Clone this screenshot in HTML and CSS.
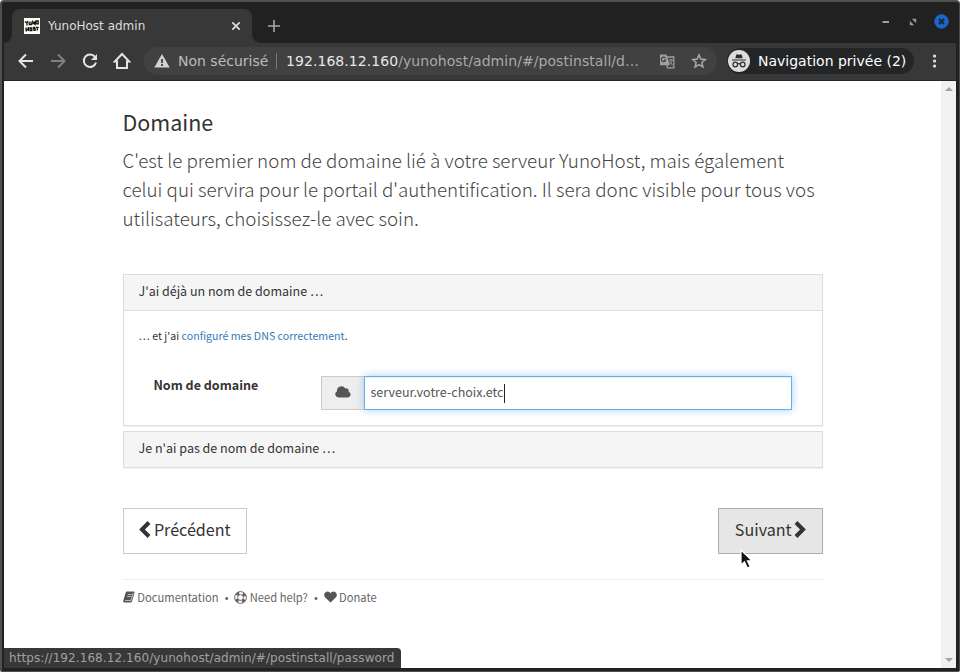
FILE: index.html
```html
<!DOCTYPE html>
<html lang="fr">
<head>
<meta charset="utf-8">
<title>YunoHost admin</title>
<link rel="stylesheet" href="styles.css">
</head>
<body>
<div class="window">
  <header class="tabstrip">
    <div class="tab">
      <svg class="favicon" width="16" height="16" viewBox="0 0 16 16"><path fill="#fffff8" d="M0 0h16v16H0z"/><path fill="none" stroke="#111" stroke-width="1.300" d="M1 3.500l1.700 1.500 1-2M3 5v2.500M5 3.500l.3 3h2l-.3-3M8.800 6.500V3.600l2 2.600V3.300M12 3h2.200v2.800H12zM2 9.500l.3 4M2 11.500h2M4.300 9v4M6 10h1.800v2.500H6zM11.300 9.500H9.700v1.300h1.400v1.500H9.300M12 9.300h2.700M13.300 9v3.500"/></svg>
      <span class="tab-title">YunoHost admin</span>
      <svg width="10" height="10" viewBox="0 0 10 10"><path d="M1.300 1.300l7.400 7.400M8.700 1.300L1.300 8.700" stroke="#dedede" stroke-width="1.700"/></svg>
    </div>
    <svg class="plus" width="12" height="12" viewBox="0 0 12 12"><path d="M6 0v12M0 6h12" stroke="#a8a8a8" stroke-width="1.600"/></svg>
    <div class="controls">
      <svg width="8" height="8" viewBox="0 0 8 8"><path d="M.5 4H7" stroke="#a0a0a0" stroke-width="2"/></svg>
      <svg width="8" height="8" viewBox="0 0 8 8"><path d="M2.800.8h4.400v4.400zM.8 2.800v4.400h4.400z" fill="#969696"/></svg>
      <svg width="15" height="15" viewBox="0 0 15 15"><circle cx="7.500" cy="7.500" r="7.200" fill="#1967c6"/><path d="M5 5l5 5M10 5l-5 5" stroke="#1d2733" stroke-width="2"/></svg>
    </div>
  </header>
  <nav class="toolbar">
    <svg class="nav-icon" width="16" height="16" viewBox="0 0 16 16"><path d="M15 8H2M8 1.500L1.500 8 8 14.500" fill="none" stroke="#e4e4e4" stroke-width="2"/></svg>
    <svg class="nav-icon" width="16" height="16" viewBox="0 0 16 16"><path d="M1 8h13M8 1.500L14.500 8 8 14.500" fill="none" stroke="#808080" stroke-width="2"/></svg>
    <svg class="nav-icon" width="16" height="16" viewBox="0 0 16 16"><path d="M13 4a6.200 6.200 0 1 0 1 5.500" fill="none" stroke="#e4e4e4" stroke-width="2"/><path d="M15 1v6H9z" fill="#e4e4e4"/></svg>
    <svg class="nav-icon" width="18" height="18" viewBox="0 0 18 18"><path d="M1.800 9.500L9 2l7.200 7.500H14V16H4V9.500z" fill="none" stroke="#e4e4e4" stroke-width="2"/></svg>
    <div class="omnibox">
      <svg width="16" height="14" viewBox="0 0 16 14"><path fill="#d2d2d2" d="M8 0l7.700 13.500H.3z"/><path d="M8 5v4M8 10v2" stroke="#3f3f3f" stroke-width="1.800"/></svg>
      <span class="insecure">Non sécurisé</span>
      <span class="url"><b>192.168.12.160</b>/yunohost/admin/#/postinstall/d…</span>
      <svg class="translate" width="15" height="15" viewBox="0 0 15 15"><path fill="#a0a0a0" d="M0 .5h6.500l3.300 10.700H0z"/><path d="M7 3h6.800v10.800H7.500l-.7-3" fill="none" stroke="#a0a0a0" stroke-width="1.300"/><path d="M5.300 4A2.200 2.200 0 1 0 5.700 6H3.500" fill="none" stroke="#414141" stroke-width="1.200"/><path d="M8.500 6h4.500M10.700 5v1M12 6.200c-.5 2-1.500 3.200-2.500 4M9.500 7.500l3 3.700" fill="none" stroke="#a0a0a0"/></svg>
      <svg class="star" width="16" height="16" viewBox="0 0 16 16"><path d="M8 1.900l1.800 4.200 4.500.4-3.400 3 1 4.400L8 11.600l-3.900 2.300 1-4.400-3.400-3 4.500-.4z" fill="none" stroke="#a9a9a9" stroke-width="1.500"/></svg>
    </div>
    <div class="private">
      <svg width="22" height="22" viewBox="0 0 22 22"><circle cx="11" cy="11" r="11" fill="#dcdcdc"/><path d="M7.300 8.300L8.500 4.200l2.500.6 2.500-.6 1.200 4.100z" fill="#292b2e"/><path d="M4 10h14" stroke="#292b2e" stroke-width="1.200"/><g fill="none" stroke="#292b2e" stroke-width="1.200"><circle cx="7.300" cy="14.500" r="2.300"/><circle cx="14.700" cy="14.500" r="2.300"/><path d="M9.600 14q1.400-.8 2.800 0"/></g></svg>
      <span>Navigation privée (2)</span>
    </div>
    <svg class="more" width="4" height="14" viewBox="0 0 4 14"><g fill="#dedede"><circle cx="2.500" cy="2" r="1.600"/><circle cx="2.500" cy="7" r="1.600"/><circle cx="2.500" cy="12" r="1.600"/></g></svg>
  </nav>
  <div class="viewport">
    <main class="page">
      <h1>Domaine</h1>
      <p class="lead">C'est le premier nom de domaine lié à votre serveur YunoHost, mais également<br>celui qui servira pour le portail d'authentification. Il sera donc visible pour tous vos<br>utilisateurs, choisissez-le avec soin.</p>
      <section class="panel">
        <h2>J'ai déjà un nom de domaine …</h2>
        <div class="panel-body">
          <p class="dns">… et j'ai <a>configuré mes DNS correctement</a>.</p>
          <div class="form-row">
            <label>Nom de domaine</label>
            <div class="input-group">
              <span class="addon"><svg width="16" height="12" viewBox="0 0 16 12"><path fill="#555" d="M3.500 11.500A3.300 3.300 0 0 1 2 5.300 4.500 4.500 0 0 1 10.300 2.500a2.600 2.600 0 0 1 3.300 3.200 3 3 0 0 1-.8 5.800z"/></svg></span>
              <div class="input"><span class="value">serveur.votre-choix.etc</span><i class="caret"></i></div>
            </div>
          </div>
        </div>
      </section>
      <section class="panel">
        <h2>Je n'ai pas de nom de domaine …</h2>
      </section>
      <div class="actions">
        <div class="btn"><svg width="12" height="17" viewBox="0 0 12 17"><path d="M10 1.500L3 8.500l7 7" fill="none" stroke="#333" stroke-width="4"/></svg><span>Précédent</span></div>
        <div class="btn hover"><span>Suivant</span><svg width="12" height="17" viewBox="0 0 12 17"><path d="M2 1.500l7 7-7 7" fill="none" stroke="#333" stroke-width="4"/></svg>
          <svg class="cursor" width="14" height="21" viewBox="0 0 14 21"><path d="M1 1v15l3.500-3.300L7.300 19l2.900-1.300-2.800-5.900H12z" fill="#111" stroke="#fff" stroke-width="1.200"/></svg>
        </div>
      </div>
      <footer>
        <svg width="12" height="12" viewBox="0 0 12 12"><path fill="#555" d="M3.500.5h7.200q1.100.2.800 1.300L9.200 10q-.4 1.400-1.600 1.500H1.300Q-.2 11 .4 9.300L2.700 1.500z"/><path d="M4.800 3.500h4M4.200 5.500h4M2 9.500h6L10.300 2" fill="none" stroke="#fff" stroke-width=".6"/></svg>
        <span>Documentation</span><span class="dot">•</span>
        <svg width="13" height="13" viewBox="0 0 13 13"><g fill="none" stroke="#666"><circle cx="6.500" cy="6.500" r="5.900"/><circle cx="6.500" cy="6.500" r="2.900"/><circle cx="6.500" cy="6.500" r="4.400" stroke-width="3" stroke-dasharray="3.200 3.712" stroke-dashoffset="-1.900"/></g></svg>
        <span>Need help?</span><span class="dot">•</span>
        <svg width="13" height="12" viewBox="0 0 13 12"><path fill="#555" d="M6.500 11.500L1 6.200C-.8 4 .4.8 3.300.5c1.500 0 2.500.8 3.200 1.800C7.200 1.300 8.200.5 9.700.5c2.900.3 4.100 3.500 2.300 5.700z"/></svg>
        <span>Donate</span>
      </footer>
    </main>
    <div class="scrollbar"><i class="up"></i><i class="down"></i></div>
    <div class="status">https://192.168.12.160/yunohost/admin/#/postinstall/password</div>
  </div>
</div>
</body>
</html>
```
FILE: styles.css
```css
* { box-sizing: border-box; }
body { margin: 0; background: #fff; }
svg { display: block; flex: none; }
span, p, h1, h2, label { white-space: nowrap; }
.window {
  width: 960px; height: 672px; overflow: hidden;
  background: #212121; border: 2px solid #4d4f50; border-bottom-width: 1px; border-right: 1px solid #4a4a4a;
  border-radius: 4px 4px 2px 2px; padding: 0 3px 3px 2px;
  display: flex; flex-direction: column;
  font-family: "DejaVu Sans", sans-serif;
}
.tabstrip { height: 41px; flex: none; display: flex; align-items: flex-end; padding-left: 8px; }
.tab {
  position: relative; width: 240px; height: 34px; background: #383838; border-radius: 8px 8px 0 0;
  display: flex; align-items: center; padding: 0 11px 0 12px;
}
.tab::before, .tab::after { content: ""; position: absolute; bottom: 0; width: 8px; height: 8px; }
.tab::before { left: -8px; background: radial-gradient(circle at 0 0, transparent 7.5px, #383838 8px); }
.tab::after { right: -8px; background: radial-gradient(circle at 100% 0, transparent 7.5px, #383838 8px); }
.tab-title { flex: 1; margin-left: 8px; font-size: 12px; line-height: 16px; color: #ddd; }
.plus { margin: 0 0 11px 16px; }
.controls { margin-left: auto; display: flex; align-items: center; gap: 20px; padding: 0 7px 14px 0; }
.controls svg:first-child { margin-right: -.5px; }
.controls svg:last-child { margin-left: -3px; }
.toolbar {
  height: 38px; flex: none; background: #383838; border-bottom: 1px solid #262626;
  display: flex; align-items: center; padding: 0 20px 1px 14px;
}
.nav-icon { margin-right: 16px; }
.nav-icon:nth-child(3) { margin-right: 15px; }
.nav-icon:nth-child(4) { margin-right: 13px; }
.omnibox {
  width: 573px; height: 28px; border-radius: 14px; background: #414141; flex: none;
  display: flex; align-items: center; padding-left: 10px; font-size: 14px; line-height: 18px;
}
.insecure { margin-left: 8px; width: 99px; color: #bcbcbc; border-right: 1px solid #777; height: 16px; line-height: 16px; }
.url { margin-left: 9px; width: 374px; color: #a9a9a9; letter-spacing: .06px; }
.url b { font-weight: 400; color: #e8e8e8; }
.star { margin-left: 16px; }
.private {
  width: 187px; height: 26px; margin-left: 10px; border-radius: 13px; background: #232527; flex: none;
  display: flex; align-items: center; padding-left: 1px; font-size: 14px; line-height: 18px; color: #fff;
}
.private span { margin-left: 8px; }
.more { margin-left: auto; }
.viewport { position: relative; flex: 1; display: flex; background: #fff; min-height: 0; }
.page {
  width: 700px; margin-left: 119px; flex: none; color: #333;
  font-family: "Noto Sans CJK JP", "Noto Sans", sans-serif;
}
h1 { margin: 28px 0 0 -.5px; font-size: 21.5px; line-height: 26px; font-weight: 400; }
.lead { margin: 10px 0 0 -.5px; font-size: 18.77px; line-height: 29px; font-weight: 300; color: #444; }
.panel { border: 1px solid #ddd; box-shadow: 0 1px 1px rgba(0,0,0,.05); margin-top: 5px; }
.lead + .panel { margin-top: 42px; }
h2 { margin: 0; height: 35px; padding: 0 14.5px; background: #f5f5f5; font-size: 12.53px; line-height: 32px; font-weight: 400; }
.panel-body { height: 115px; border-top: 1px solid #ddd; padding: 15px 14.5px 0; }
.dns { margin: 0; font-size: 10.65px; line-height: 20px; }
.dns a { color: #337ab7; }
.form-row { display: flex; margin-top: 30px; padding: 0 15px; }
label { width: 167.5px; font-size: 12.53px; font-weight: 700; line-height: 17px; }
.input-group { display: flex; width: 471px; height: 34px; flex: none; }
.addon { width: 43px; border: 1px solid #ccc; border-right: 0; background: #eee; display: flex; align-items: center; justify-content: center; padding-bottom: 2px; }
.input {
  flex: 1; display: flex; align-items: center; padding: 0 0 0 5.5px; border: 1px solid #66afe9; background: #fff;
  box-shadow: inset 0 1px 1px rgba(0,0,0,.075), 0 0 8px rgba(102,175,233,.6);
  font-size: 12.53px; line-height: 20px; color: #555;
}
.value { padding-bottom: 2px; }
.caret { width: 1px; height: 19px; margin-left: .5px; background: #222; }
.actions { display: flex; justify-content: space-between; margin-top: 40px; }
.btn {
  position: relative; width: 124px; height: 46px; border: 1px solid #ccc; background: #fff;
  display: flex; align-items: center; justify-content: center; gap: 2.5px; font-size: 16.1px; line-height: 24px; padding: 0 0 4px;
}
.hover { width: 105px; background: #e6e6e6; border-color: #adadad; }
.cursor { position: absolute; left: 21px; top: 40px; }
footer {
  margin-top: 25px; border-top: 1px solid #eee; padding-top: 8px; height: 27px;
  display: flex; align-items: center; font-size: 11.2px; line-height: 18px; color: #666;
}
footer span { margin-left: 2.3px; }
footer .dot { margin: 0 6px; }
.scrollbar {
  margin-left: auto; width: 15px; background: #f1f1f1;
  display: flex; flex-direction: column; justify-content: space-between; align-items: center; padding: 6px 0;
}
.scrollbar i { border: 4px solid transparent; width: 0; height: 0; }
.scrollbar .up { border-top: 0; border-bottom-color: #a3a3a3; }
.scrollbar .down { border-bottom: 0; border-top-color: #a3a3a3; }
.status {
  position: absolute; left: 0; bottom: 0; width: 397px; height: 20px; background: #383838; color: #a0a0a0;
  border-radius: 0 4px 0 0; padding-left: 5px; font-size: 12px; line-height: 20px; letter-spacing: .08px; white-space: nowrap;
}
```
